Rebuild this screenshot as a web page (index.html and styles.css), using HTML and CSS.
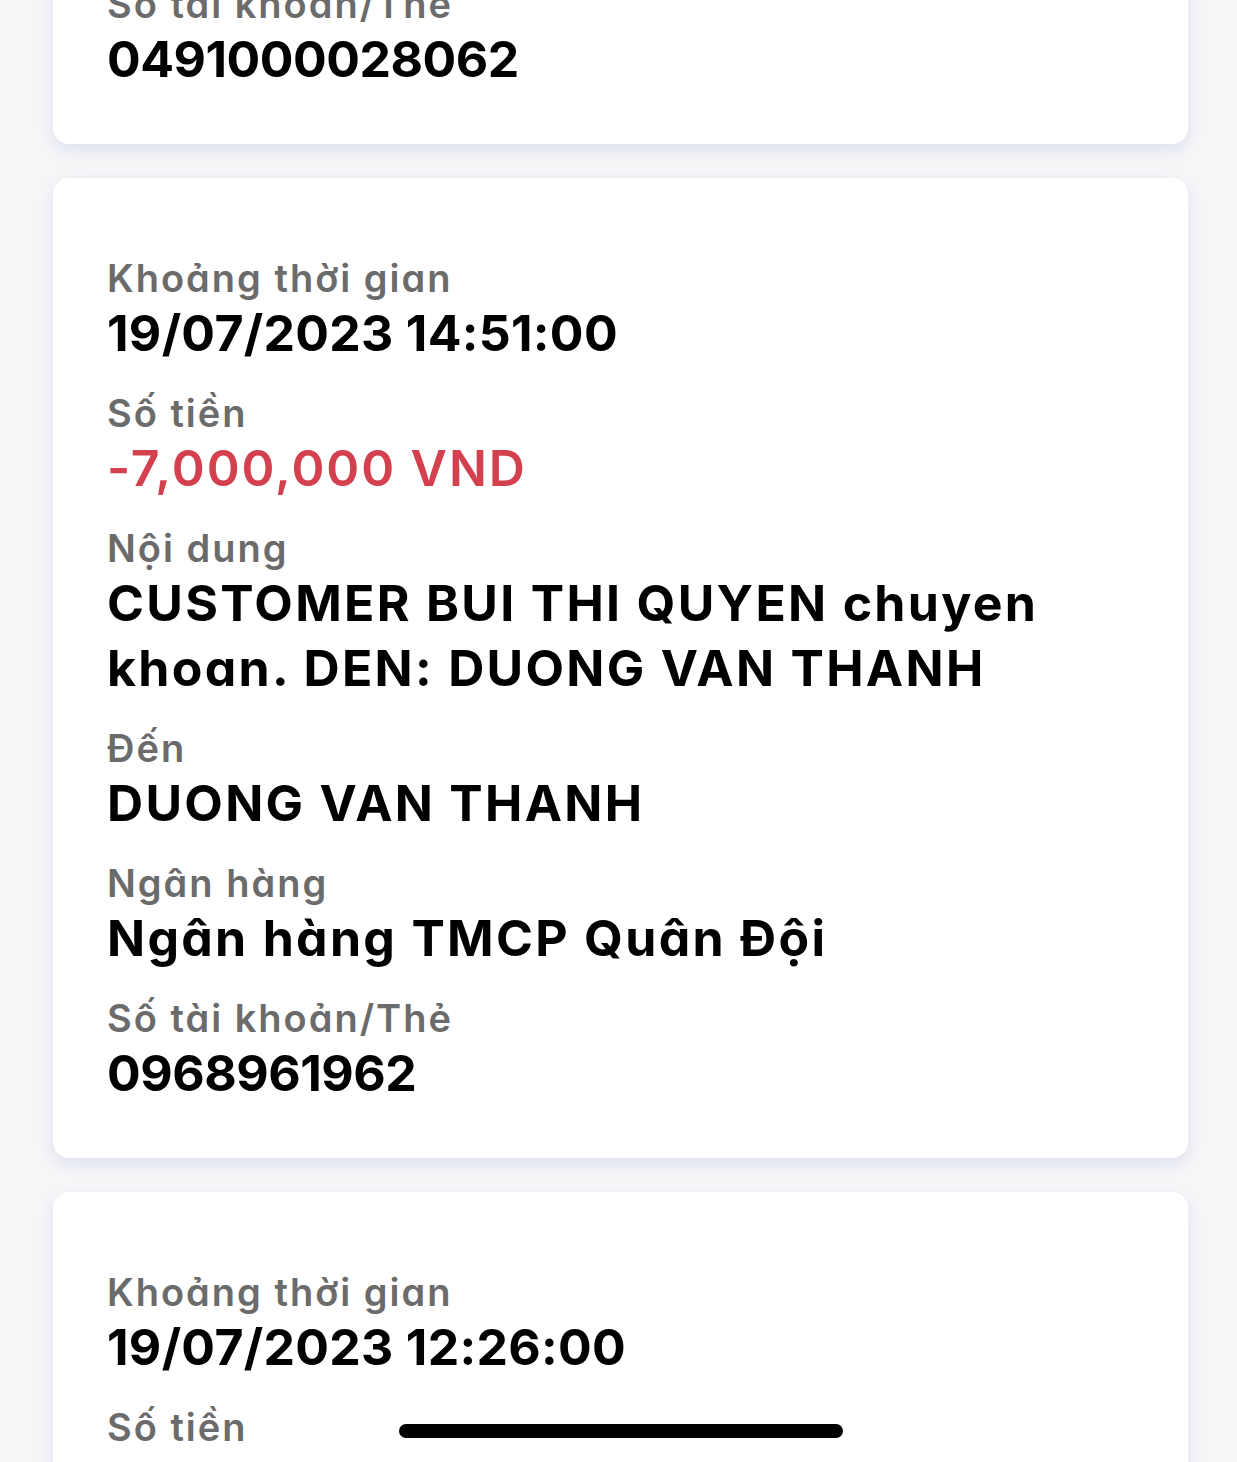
FILE: index.html
```html
<!DOCTYPE html>
<html lang="vi">
<head>
<meta charset="utf-8">
<title>Lịch sử giao dịch</title>
<link rel="stylesheet" href="styles.css">
</head>
<body>
<main class="list">
  <section class="card card-first">
    <div class="field">
      <div class="label">Số tài khoản/Thẻ</div>
      <div class="value value-account">0491000028062</div>
    </div>
  </section>

  <section class="card">
    <div class="field">
      <div class="label">Khoảng thời gian</div>
      <div class="value value-time">19/07/2023 14:51:00</div>
    </div>
    <div class="field">
      <div class="label">Số tiền</div>
      <div class="value value-red">-7,000,000 VND</div>
    </div>
    <div class="field">
      <div class="label">Nội dung</div>
      <div class="value">CUSTOMER BUI THI QUYEN chuyen khoan. DEN: DUONG VAN THANH</div>
    </div>
    <div class="field">
      <div class="label">Đến</div>
      <div class="value">DUONG VAN THANH</div>
    </div>
    <div class="field">
      <div class="label">Ngân hàng</div>
      <div class="value">Ngân hàng TMCP Quân Đội</div>
    </div>
    <div class="field">
      <div class="label">Số tài khoản/Thẻ</div>
      <div class="value value-account">0968961962</div>
    </div>
  </section>

  <section class="card">
    <div class="field">
      <div class="label">Khoảng thời gian</div>
      <div class="value value-time">19/07/2023 12:26:00</div>
    </div>
    <div class="field">
      <div class="label">Số tiền</div>
      <div class="value value-red">&nbsp;</div>
    </div>
  </section>
</main>
<div class="home-indicator"></div>
</body>
</html>
```

FILE: styles.css
```css
html, body {
  margin: 0;
  padding: 0;
}

body {
  background: #f6f6f8;
  font-family: Inter, "Noto Sans", "Liberation Sans", sans-serif;
  font-feature-settings: "cv11";
  height: 1462px;
  overflow: hidden;
  position: relative;
}

.list {
  display: flex;
  flex-direction: column;
  gap: 34px;
  padding: 0 49px 0 53px;
}

.card {
  background: #ffffff;
  border-radius: 16px;
  box-shadow: 0 6px 14px rgba(190, 198, 228, 0.45);
  padding: 78px 54px 52px 54px;
  display: flex;
  flex-direction: column;
  gap: 25px;
}

.card-first {
  margin-top: -96px;
}

.label {
  font-size: 38px;
  line-height: 45px;
  font-weight: 600;
  color: #6b6b6b;
  letter-spacing: 2px;
}

.value {
  font-size: 50px;
  line-height: 65px;
  font-weight: 700;
  color: #000000;
  letter-spacing: 2.3px;
}

.value-time {
  letter-spacing: 0.3px;
}

.value-account {
  letter-spacing: -0.5px;
}

.value-red {
  color: #d3414f;
  font-weight: 600;
  letter-spacing: 1.9px;
}

.home-indicator {
  position: absolute;
  left: 399px;
  bottom: 24px;
  width: 444px;
  height: 14px;
  border-radius: 7px;
  background: #000000;
}
```
